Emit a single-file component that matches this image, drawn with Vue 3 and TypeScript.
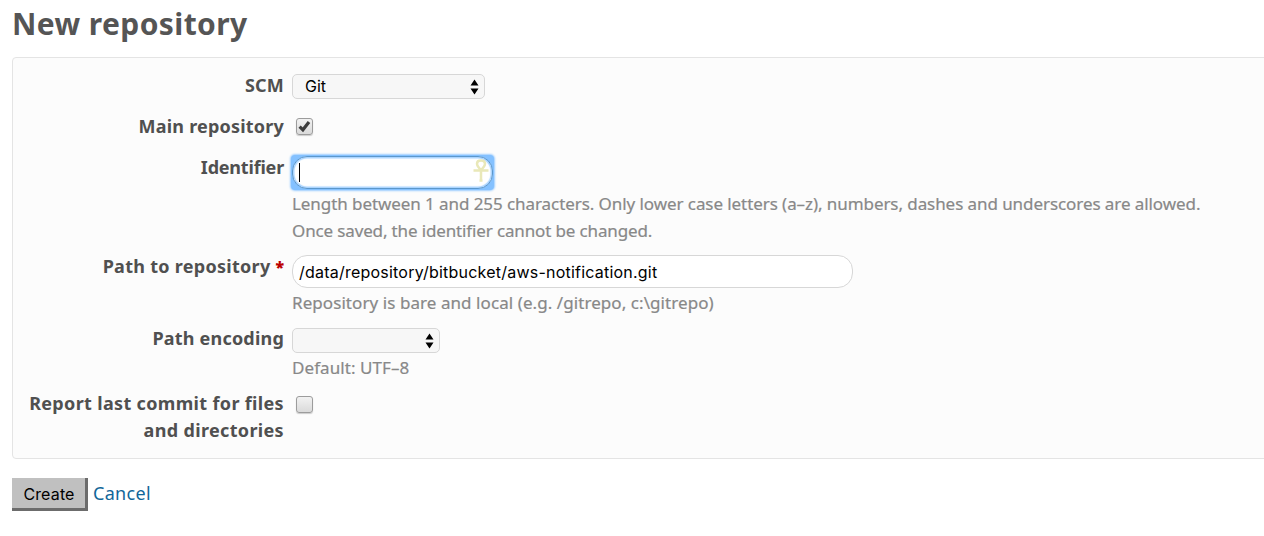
<script setup lang="ts">
import { ref } from 'vue'

const scm = ref('Git')
const path = ref('/data/repository/bitbucket/aws-notification.git')
</script>

<template>
  <main class="page">
    <h2><span>New repository</span></h2>
    <form class="box" @submit.prevent>
      <div class="row scm">
        <label>SCM</label>
        <div class="select wide">
          <span>{{ scm }}</span>
          <svg class="arrows" width="9" height="16" viewBox="0 0 9 16"><path d="M4.5 0.5L8.5 6.5H0.5ZM0.5 9.5H8.5L4.5 15.5Z" /></svg>
        </div>
      </div>
      <div class="row main-repo">
        <label>Main repository</label>
        <div class="check">
          <svg width="17" height="17" viewBox="0 0 17 17"><path d="M3.6 8.600L6.900 11.800L13 4" /></svg>
        </div>
      </div>
      <div class="row identifier">
        <label>Identifier</label>
        <div class="field">
          <div class="focus">
            <div class="input short">
              <i class="caret"></i>
              <svg class="ankh" width="18" height="24" viewBox="0 0 18 24"><path d="M9 11C6.500 8.500 5 6.500 5 4.700C5 0.500 13 0.500 13 4.700C13 6.500 11.500 8.500 9 11ZM1.500 11.500H16.500M9 11V22.500M7.500 21.500H10.500" /></svg>
            </div>
          </div>
          <em class="hint"><span class="h1">Length between 1 and 255 characters. Only lower case letters (a–z), numbers, dashes and underscores are allowed.</span><br><span class="h2">Once saved, the identifier cannot be changed.</span></em>
        </div>
      </div>
      <div class="row path">
        <label>Path to repository <b>*</b></label>
        <div class="field">
          <div class="input long"><span>{{ path }}</span></div>
          <em class="hint"><span class="h3">Repository is bare and local (e.g. /gitrepo, c:\gitrepo)</span></em>
        </div>
      </div>
      <div class="row encoding">
        <label>Path encoding</label>
        <div class="field">
          <div class="select narrow">
            <svg class="arrows" width="9" height="16" viewBox="0 0 9 16"><path d="M4.5 0.5L8.5 6.5H0.5ZM0.5 9.5H8.5L4.5 15.5Z" /></svg>
          </div>
          <em class="hint"><span class="h4">Default: UTF–8</span></em>
        </div>
      </div>
      <div class="row report">
        <label>Report last commit for files<br>and directories</label>
        <div class="check"></div>
      </div>
    </form>
    <div class="actions">
      <button type="button">Create</button>
      <a>Cancel</a>
    </div>
  </main>
</template>

<style>
html, body { background: #fff; overflow: hidden; }
</style>

<style scoped>
* { box-sizing: border-box; }
.page { height: 536px; padding-left: 12px; overflow: hidden; font-family: "Noto Sans", sans-serif; }
h2 { margin: 0; height: 57px; padding-top: 4px; font-size: 30px; line-height: 40px; font-weight: 700; letter-spacing: 0.4px; color: #555; white-space: nowrap; }
.box { width: 1270px; height: 402px; padding-top: 14px; border: 1px solid #e4e4e4; border-radius: 4px; background: #fcfcfc; }
.row { display: grid; grid-template-columns: 271px 1fr; column-gap: 8px; align-items: start; }
.scm, .main-repo { height: 41px; }
.identifier { height: 99px; }
.path { height: 72px; }
.encoding { height: 65px; }
label { text-align: right; font-size: 18px; line-height: 27px; font-weight: 700; letter-spacing: 0.2px; color: #505050; white-space: nowrap; }
.identifier label { letter-spacing: -0.2px; }
.path label { letter-spacing: 0.28px; }
.report label { letter-spacing: 0.34px; }
label b { color: #bb0000; font-size: 16px; line-height: 16px; letter-spacing: 0; }
.select { display: flex; align-items: center; justify-content: flex-end; height: 25px; margin-top: 2px; padding: 0 5px 0 12px; border: 1px solid #d7d7d7; border-radius: 5px; background: #f7f7f7; font: 16px/23px Inter, sans-serif; color: #000; }
.select span { flex: 1; }
.wide { width: 193px; }
.narrow { width: 148px; margin-top: 3px; }
.check { width: 17px; height: 17px; margin: 5px 0 0 4px; border: 1px solid #9c9c9c; border-radius: 3px; background: linear-gradient(#f2f2f2, #dadada); box-shadow: 0 1px 1px #ccc; }
.report .check { margin-top: 6px; }
.check svg { display: block; margin: -1px; fill: none; stroke: #3c3c3c; stroke-width: 3.2; }
.arrows { fill: #000; }
.focus { width: 201px; height: 33px; margin-top: 2px; border-radius: 3px; background: #84c1ff; box-shadow: 0 0 0 1px #84c1ff, 0 0 2px 2px #9ccdff; }
.input { display: flex; align-items: center; height: 33px; border: 1px solid #d7d7d7; border-radius: 15px; background: #fff; padding-left: 6px; font: 16px/24px Inter, sans-serif; color: #000; white-space: nowrap; }
.short { border-color: #5b97cb; box-shadow: inset 0 0 1px 1.5px #a8d3ff; justify-content: space-between; }
.caret { width: 1px; height: 19px; background: #000; }
.ankh { fill: none; stroke: #e9e8b8; stroke-width: 2.5; margin: -4px 2px 0 0; }
.long { width: 561px; margin-top: 2px; letter-spacing: 0.22px; }
.hint { display: block; font-size: 17px; line-height: 27px; font-style: normal; color: #888; -webkit-text-stroke: 0.2px #888; white-space: nowrap; margin-top: 1px; }
.h1 { letter-spacing: -0.072px; }
.h2 { letter-spacing: -0.14px; }
.h3, .h4 { letter-spacing: 0.07px; }
.actions { display: flex; align-items: center; height: 33px; margin-top: 19px; }
button { width: 76px; height: 33px; padding: 1px 0 0 1px; border: 3px solid #6c6c6c; border-width: 0 3px 3px 0; background: #c0c0c0; color: #000; font: 16px Inter, sans-serif; letter-spacing: 0.15px; }
a { margin: -2px 0 0 5px; font-size: 18px; line-height: 27px; letter-spacing: 0.3px; color: #169; }
</style>
